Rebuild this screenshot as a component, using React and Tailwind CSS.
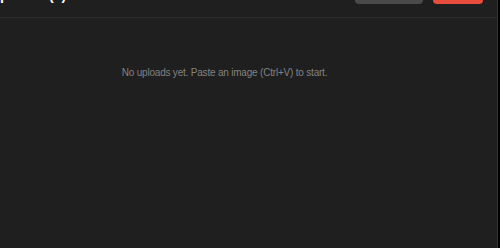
export default function App() {
  return (
    <div className="w-[500px] h-[248px] overflow-hidden bg-black flex" style={{ fontFamily: '"Liberation Sans", Arial, sans-serif' }}>
      <div className="w-[498px] h-full bg-[#1f1f1f] border-r border-[#333333] flex flex-col">
        <div className="-mt-[30px] h-[48px] flex items-end justify-between border-b border-[#2c2c2c] pb-[13px] pr-[14px] shrink-0">
          <span className="-ml-[10px] mb-[2px] text-white text-[14px] font-bold leading-none">Uploads (0)</span>
          <div className="flex items-center gap-[10px]">
            <button className="w-[68px] h-[26px] rounded bg-[#4a4a4a] text-white text-[12px]">Clear all</button>
            <button className="w-[50px] h-[26px] rounded bg-[#e74c3c] text-white text-[12px]">Close</button>
          </div>
        </div>
        <div className="flex justify-center pt-[48px]">
          <p className="mr-[48px] text-[#828282] text-[10px] tracking-[-0.2px] leading-[14px]">No uploads yet. Paste an image (Ctrl+V) to start.</p>
        </div>
      </div>
    </div>
  );
}
